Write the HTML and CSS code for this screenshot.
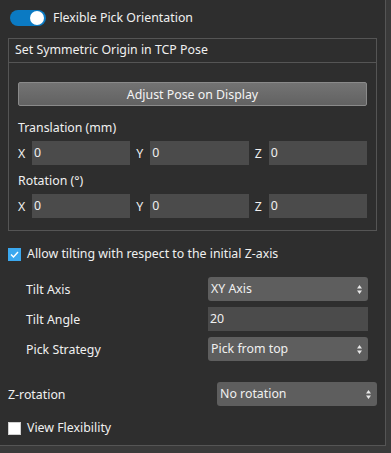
FILE: index.html
```html
<!DOCTYPE html>
<html lang="en">
<head>
    <meta charset="UTF-8">
    <meta name="viewport" content="width=device-width, initial-scale=1.0">
    <title>Flexible Pick Orientation</title>
    <link rel="stylesheet" href="styles.css">
</head>
<body>
    <div class="panel">
        <div class="toggle-row">
            <span class="toggle"><span class="knob"></span></span>
            <span>Flexible Pick Orientation</span>
        </div>

        <div class="group">
            <div class="group-title">Set Symmetric Origin in TCP Pose</div>
            <div class="group-body">
                <button class="pose-btn">Adjust Pose on Display</button>

                <div class="section-label first">Translation (mm)</div>
                <div class="xyz">
                    <div class="cell"><span class="axis">X</span><span class="field">0</span></div>
                    <div class="cell"><span class="axis">Y</span><span class="field">0</span></div>
                    <div class="cell"><span class="axis">Z</span><span class="field">0</span></div>
                </div>

                <div class="section-label">Rotation (°)</div>
                <div class="xyz">
                    <div class="cell"><span class="axis">X</span><span class="field">0</span></div>
                    <div class="cell"><span class="axis">Y</span><span class="field">0</span></div>
                    <div class="cell"><span class="axis">Z</span><span class="field">0</span></div>
                </div>
            </div>
        </div>

        <div class="check-row tilt-check">
            <span class="checkbox checked">
                <svg width="9" height="7" viewBox="0 0 9 7"><path d="M1 3.5 L3.5 6 L8 1" fill="none" stroke="#fff" stroke-width="1.4"/></svg>
            </span>
            <span>Allow tilting with respect to the initial Z-axis</span>
        </div>

        <div class="tilt-form">
            <div class="form-row">
                <span class="form-label">Tilt Axis</span>
                <span class="select">XY Axis
                    <svg class="arrows" width="5" height="9" viewBox="0 0 5 9"><path d="M2.5 0 L5 3.5 L0 3.5 Z M2.5 9 L5 5.5 L0 5.5 Z" fill="#e8e8e8"/></svg>
                </span>
            </div>
            <div class="form-row">
                <span class="form-label">Tilt Angle</span>
                <span class="field wide">20</span>
            </div>
            <div class="form-row">
                <span class="form-label">Pick Strategy</span>
                <span class="select">Pick from top
                    <svg class="arrows" width="5" height="9" viewBox="0 0 5 9"><path d="M2.5 0 L5 3.5 L0 3.5 Z M2.5 9 L5 5.5 L0 5.5 Z" fill="#e8e8e8"/></svg>
                </span>
            </div>
        </div>

        <div class="form-row zrot">
            <span class="form-label">Z-rotation</span>
            <span class="select">No rotation
                <svg class="arrows" width="5" height="9" viewBox="0 0 5 9"><path d="M2.5 0 L5 3.5 L0 3.5 Z M2.5 9 L5 5.5 L0 5.5 Z" fill="#e8e8e8"/></svg>
            </span>
        </div>

        <div class="check-row view-check">
            <span class="checkbox"></span>
            <span>View Flexibility</span>
        </div>
    </div>
</body>
</html>
```

FILE: styles.css
```css
body {
    margin: 0;
    padding: 0;
    background-color: #3a3a3a;
    font-family: "Noto Sans", "Open Sans", sans-serif;
    font-size: 12.35px;
    color: #f0f0f0;
}

.panel {
    width: 385px;
    height: 445px;
    background-color: #2e2e2e;
    border-right: 1px solid #555;
    border-bottom: 1px solid #555;
    box-sizing: content-box;
}

.toggle-row {
    display: flex;
    align-items: center;
    gap: 7px;
    padding: 10px 0 0 10px;
    height: 16px;
    line-height: 16px;
}

.toggle {
    width: 36px;
    height: 16px;
    border-radius: 8px;
    background-color: #0b7ac3;
    position: relative;
}

.knob {
    position: absolute;
    right: 2px;
    top: 1px;
    width: 14px;
    height: 14px;
    border-radius: 50%;
    background-color: #fff;
}

.group {
    margin: 12px 0 0 8px;
    width: 367px;
    border: 1px solid #555;
}

.group-title {
    height: 23px;
    line-height: 21px;
    padding-left: 6px;
    border-bottom: 1px solid #555;
}

.group-body {
    padding: 19px 9px 12px 9px;
}

.pose-btn {
    display: block;
    width: 349px;
    height: 24px;
    border: 1px solid #8a8a8a;
    border-radius: 2px;
    background: linear-gradient(#737373, #626262);
    color: #f4f4f4;
    font-family: inherit;
    font-size: inherit;
    padding: 0;
}

.section-label {
    margin-top: 8px;
    height: 16px;
    line-height: 16px;
}

.section-label.first {
    margin-top: 14px;
}

.xyz {
    display: flex;
    gap: 6px;
    margin-top: 5px;
    width: 349px;
}

.xyz + .section-label {
    margin-top: 8px;
}

.cell {
    flex: 1;
    display: flex;
    align-items: center;
}

.axis {
    width: 14px;
    flex: none;
}

.field {
    flex: 1;
    height: 24px;
    line-height: 24px;
    padding-left: 2px;
    background-color: #4b4b4b;
}

.check-row {
    display: flex;
    align-items: center;
    gap: 6px;
    padding-left: 8px;
    height: 14px;
    line-height: 14px;
}

.tilt-check {
    margin-top: 16px;
}

.checkbox {
    width: 13px;
    height: 13px;
    box-sizing: border-box;
    background-color: #fff;
    border: 1px solid #d0d0d0;
    display: flex;
    align-items: center;
    justify-content: center;
}

.checkbox.checked {
    background-color: #3ba8ef;
    border-color: #3ba8ef;
}

.tilt-form {
    margin-top: 16px;
    padding-left: 26px;
    display: flex;
    flex-direction: column;
    gap: 6px;
}

.form-row {
    display: flex;
    align-items: center;
    height: 24px;
}

.form-label {
    width: 182px;
    flex: none;
}

.select {
    width: 160px;
    height: 24px;
    line-height: 24px;
    box-sizing: border-box;
    padding-left: 3px;
    border-radius: 3px;
    background-color: #5e5e5e;
    position: relative;
}

.arrows {
    position: absolute;
    right: 6px;
    top: 8px;
}

.field.wide {
    flex: none;
    width: 160px;
    box-sizing: border-box;
}

.zrot {
    margin-top: 21px;
    padding-left: 8px;
}

.zrot .form-label {
    width: 209px;
}

.view-check {
    margin-top: 15px;
}
```
